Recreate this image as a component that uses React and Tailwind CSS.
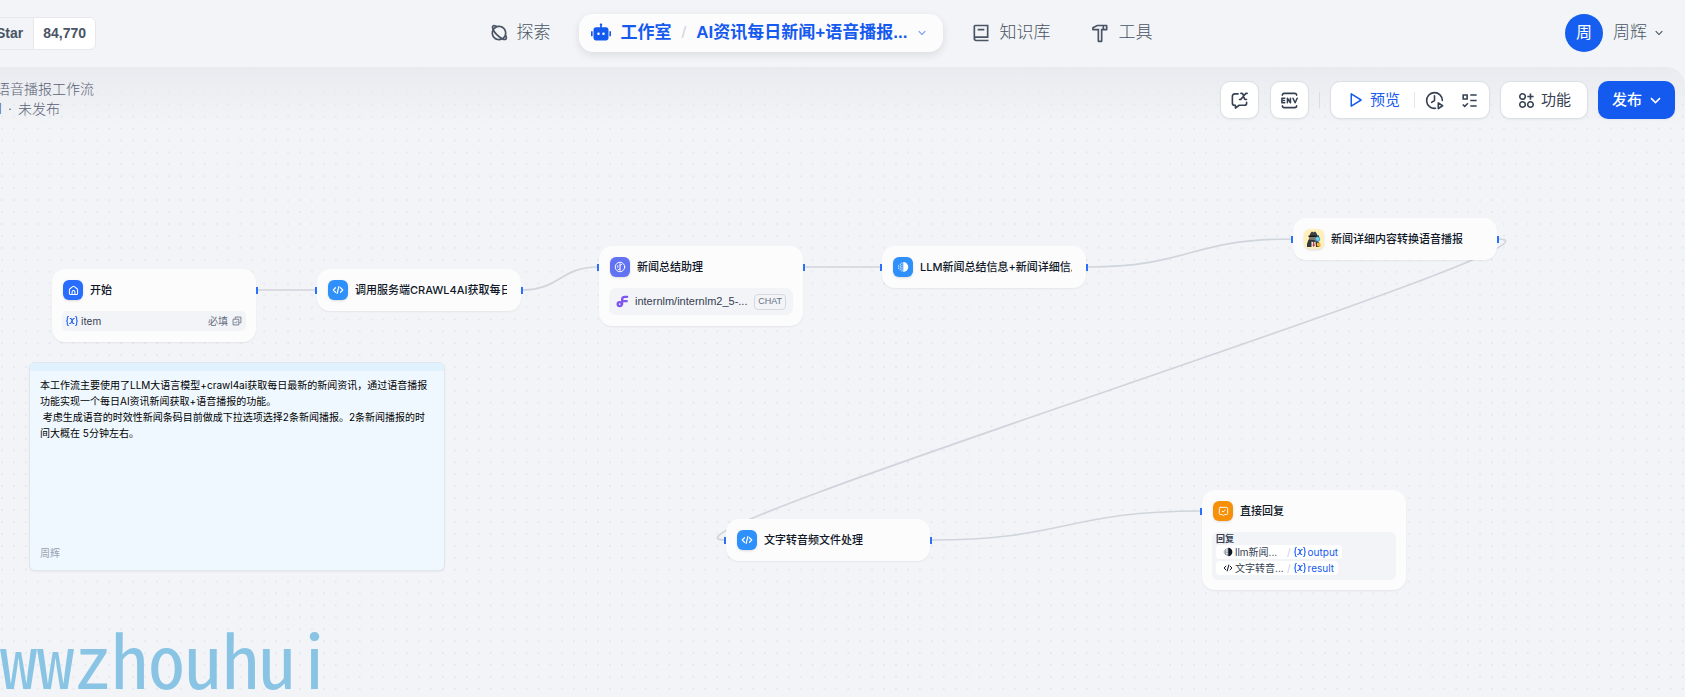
import React from 'react';
import {
  RiApps2AddLine,
  RiArrowDownSLine,
  RiBook2Line,
  RiHammerLine,
  RiListCheck3,
  RiPlanetLine,
  RiPlayLargeLine,
  RiRobot2Fill,
} from 'react-icons/ri';

const NODE_WIDTH = 204;

const EDGES = [
  [257, 223, 316, 223],
  [522, 223, 598, 200],
  [804, 200, 881, 200],
  [1087, 200, 1292, 172],
  [1498, 172, 725, 473],
  [931, 473, 1201, 444],
];

const edgePath = ([sx, sy, tx, ty]) => {
  const dx = tx - sx;
  const offset = dx >= 0 ? dx / 2 : 3.7 * Math.sqrt(-dx);
  return `M${sx} ${sy} C${sx + offset} ${sy} ${tx - offset} ${ty} ${tx} ${ty}`;
};

const CodeIcon = ({ className }) => (
  <svg viewBox="0 0 24 24" className={className} fill="none" stroke="currentColor" strokeWidth="2.4" strokeLinecap="round" strokeLinejoin="round">
    <path d="M7 7.5 2.5 12 7 16.5M17 7.5l4.5 4.5-4.5 4.5M13.8 5l-3.6 14" />
  </svg>
);

const HomeIcon = ({ className }) => (
  <svg viewBox="0 0 14 14" className={className} fill="none" stroke="currentColor" strokeWidth="1.3" strokeLinecap="round" strokeLinejoin="round">
    <path d="M1.8 6.2c0-.6.2-1 .7-1.4l3.4-2.7c.7-.5 1.5-.5 2.2 0l3.4 2.7c.5.4.7.8.7 1.4v4.5c0 .9-.6 1.5-1.5 1.5H3.3c-.9 0-1.5-.6-1.5-1.5z" />
    <path d="M5.2 12V8.8a1.8 1.8 0 0 1 3.6 0V12" />
  </svg>
);

const LlmIcon = ({ className }) => (
  <svg viewBox="0 0 24 24" className={className} fill="none" stroke="currentColor" strokeWidth="2" strokeLinecap="round" strokeLinejoin="round">
    <circle cx="12" cy="12" r="9.5" />
    <path d="M12 5.500v13M7.500 9.500v3M12 9l3-2M12 16l-3 1" />
  </svg>
);

const TemplateIcon = ({ className }) => (
  <svg viewBox="0 0 24 24" className={className} fill="currentColor">
    <path d="M12.5 2a10 10 0 0 1 0 20z" />
    <path d="M9 3h2v3H9zM9 7.5h2v3H9zM9 12h2v3H9zM9 16.5h2V21H9zM5.5 5.5h2v3h-2zM5.5 10h2v3.5h-2zM5.5 15h2v3.5h-2zM2 8.5h2V11H2zM2 13h2v2.5H2z" opacity=".8" />
  </svg>
);

const AnswerIcon = ({ className }) => (
  <svg viewBox="0 0 14 14" className={className} fill="none" stroke="currentColor" strokeWidth="1.2" strokeLinecap="round" strokeLinejoin="round">
    <path d="M3 1.7h8c.8 0 1.3.5 1.3 1.3v6.500c0 .8-.5 1.300-1.300 1.300H8.600L7 12.500l-1.600-1.700H3c-.8 0-1.300-.5-1.300-1.300V3c0-.8.5-1.300 1.300-1.300z" />
    <path d="m5.200 6.500 1.300 1.300L9 5" />
  </svg>
);

const DetectiveIcon = ({ className }) => (
  <svg viewBox="0 0 20 20" className={className}>
    <path d="M6 5 7.500 2.800h1.300l.7.600.7-.600h1.300L13 5l.5 2.500h-8z" fill="#3f4245" />
    <path d="M4.500 6.600h10.500V8H4.500z" fill="#17191b" />
    <path d="M5 8h9v4H5z" fill="#85796b" />
    <path d="M4.500 10.500 3 15v3h12.500v-4l-2-2.500z" fill="#35383b" />
    <path d="m7.500 12.500 2 .8 2-.8.500 5.500h-4.500z" fill="#f4f1ef" />
    <path d="M9.200 13h1l.6 3.700L9.700 18l-1.100-1.300z" fill="#cf3d36" />
    <circle cx="13.500" cy="10" r="2.300" fill="#6fd0ea" stroke="#2c91b5" strokeWidth=".8" />
    <path d="m13 13.500 3 .5 1 2.500-1.500 1.500-2.500-1z" fill="#f3b62c" />
  </svg>
);

const ModelIcon = ({ className }) => (
  <svg viewBox="0 0 14 14" className={className} fill="none" stroke="#7f56ed" strokeWidth="2.5" strokeLinecap="round">
    <circle cx="4" cy="9.800" r="2.200" />
    <path d="M6.600 10V5c0-2 1-3 2.800-3h2.600M6.800 6.600h4.800" />
  </svg>
);

const ChatVarIcon = ({ className }) => (
  <svg viewBox="0 0 20 20" className={className} fill="none" stroke="currentColor" strokeWidth="1.7" strokeLinecap="round" strokeLinejoin="round">
    <path d="M8.500 3H5C3.500 3 2.500 4 2.500 5.500v7C2.500 14 3.500 15 5 15h.7v3l4-3H15c1.500 0 2.500-1 2.500-2.500V12" />
    <path d="M11.500 2.500h.9c.8 0 1.200.4 1.400 1.100l1.300 4.300c.2.700.6 1.100 1.400 1.100h.9M18 2.500h-.5c-.7 0-1.200.3-1.600.9L12 8.100c-.4.600-.9.900-1.600.9H10" />
  </svg>
);

const EnvIcon = ({ className }) => (
  <svg viewBox="0 0 20 20" className={className} fill="none" stroke="currentColor" strokeWidth="1.6" strokeLinecap="round" strokeLinejoin="round">
    <path d="M2.500 4.500c0-1.200.8-2 2-2h11c1.200 0 2 .8 2 2M2.500 15.500c0 1.200.8 2 2 2h11c1.200 0 2-.8 2-2" />
    <path d="M5 7.600H2v4.800h3M2 10h2.700M7.800 12.400V7.600l3.200 4.800V7.600M13.700 7.600l2.200 4.800 2.200-4.800" />
  </svg>
);

const ClockPlayIcon = ({ className }) => (
  <svg viewBox="0 0 20 20" className={className} fill="none" stroke="currentColor" strokeWidth="1.7" strokeLinecap="round" strokeLinejoin="round">
    <path d="M11 18.200A8.300 8.300 0 1 1 18.300 10M10 5v5l-3 2" />
    <path d="m14 12.500 4.500 3-4.500 3z" />
  </svg>
);

const CopyCheckIcon = ({ className }) => (
  <svg viewBox="0 0 14 14" className={className} fill="none" stroke="currentColor" strokeWidth="1.2" strokeLinejoin="round">
    <path d="M4.500 4V1.500h8v8H10M1.500 4.500h8v8h-8z" />
    <path d="m3.500 8.500 1.500 1.500 2.600-3" />
  </svg>
);

const VarIcon = () => (
  <svg viewBox="0 0 14 14" className="size-3 shrink-0 text-[#155aef]" fill="none" stroke="currentColor" strokeWidth="1.2" strokeLinecap="round" strokeLinejoin="round">
    <path d="M2.800 1.800C1.700 1.800 1.500 2.400 1.500 3.300v2.200C1.500 6.400 1.200 7 .6 7c.6 0 .9.6.9 1.500v2.200c0 .9.2 1.500 1.300 1.500M11.200 1.800c1.100 0 1.300.6 1.300 1.500v2.200c0 .9.3 1.500.9 1.500-.6 0-.9.600-.9 1.500v2.200c0 .9-.2 1.500-1.300 1.500" />
    <path d="M4.900 4.200h.5c.6 0 .9.300 1.100.8l1.200 4c.2.500.5.8 1.100.8h.4M9.700 4.200h-.2c-.6 0-1 .3-1.400.8L5.900 9c-.4.500-.8.800-1.400.8h-.2" />
  </svg>
);

const Handle = ({ side }) => (
  <span className={`absolute top-[18px] h-[7px] w-[2px] bg-[#2970ff] ${side === 'left' ? '-left-[2px]' : '-right-[2px]'}`} />
);

const Node = ({ x, y, title, icon, color, input = true, output = true, children }) => (
  <section
    className="absolute rounded-[13px] bg-[#fcfcfd] shadow-[0_1px_2px_rgba(16,24,40,0.06)]"
    style={{ left: x, top: y, width: NODE_WIDTH }}
  >
    {input && <Handle side="left" />}
    {output && <Handle side="right" />}
    <div className="flex h-[42px] items-center gap-[7px] px-[11px]">
      <span className={`flex size-5 shrink-0 items-center justify-center rounded-md text-white shadow-sm ${color}`}>{icon}</span>
      <h2 className="mr-[3px] min-w-0 overflow-hidden whitespace-nowrap text-[11px] font-medium text-[#101828]">{title}</h2>
    </div>
    {children}
  </section>
);

const VarTag = ({ icon, node, name }) => (
  <div className="flex h-[14px] w-fit items-center rounded bg-white pr-1 pl-[7px] text-[10px]">
    {icon}
    <span className="ml-[2px] w-[52px] overflow-hidden whitespace-nowrap text-[#354052]">{node}</span>
    <span className="mr-[3px] text-[#c8ceda]">/</span>
    <VarIcon />
    <span className="ml-[2px] text-[#155aef]">{name}</span>
  </div>
);

const NavItem = ({ icon, label }) => (
  <a href="#" className="flex h-[38px] items-center gap-2 px-3 text-[17px] font-light text-[#495464]">
    {icon}
    {label}
  </a>
);

const Header = () => (
  <header className="flex h-[67px] shrink-0 items-center justify-between pr-[23px] pb-px font-['Liberation_Sans','Noto_Sans_CJK_SC',sans-serif]">
    <div className="flex w-24 justify-end overflow-hidden text-[14px] font-bold text-[#495464]">
      <a href="#" className="flex h-[33px] shrink-0 items-center rounded-[6px] border border-[#e6e8ed]">
        <span className="px-[10px]">Star</span>
        <span className="flex h-full items-center rounded-r-[5px] border-l border-[#e6e8ed] bg-white px-[9px]">84,770</span>
      </a>
    </div>

    <nav className="flex items-center gap-4">
      <NavItem icon={<RiPlanetLine className="size-5" />} label="探索" />
      <div className="flex h-[38px] items-center rounded-[14px] bg-[#fcfcfd] pr-[14px] pl-3 text-[17px] font-bold text-[#155aef] shadow-[0_3px_8px_rgba(16,24,40,0.1)]">
        <a href="#" className="flex items-center gap-[10px]">
          <RiRobot2Fill className="size-5" />
          工作室
        </a>
        <span className="mx-[10px] font-normal text-[#d0d5dc]">/</span>
        <button className="flex items-center gap-[8px]">
          AI资讯每日新闻+语音播报...
          <RiArrowDownSLine className="size-[14px] opacity-60" />
        </button>
      </div>
      <NavItem icon={<RiBook2Line className="size-5" />} label="知识库" />
      <NavItem icon={<RiHammerLine className="size-5" />} label="工具" />
    </nav>

    <button className="flex items-center pl-5 text-[17px] font-light text-[#495464]">
      <span className="flex size-[38px] items-center justify-center rounded-full bg-[#155eef] text-[16px] font-normal text-white">周</span>
      <span className="ml-[10px]">周辉</span>
      <RiArrowDownSLine className="-mr-1 ml-[5px] size-[14px]" />
    </button>
  </header>
);

const Toolbar = () => (
  <div className="relative z-10 flex items-start justify-between pt-[14px] pr-[10px]">
    <div className="w-[94px] overflow-hidden text-[14px] leading-5 font-light whitespace-nowrap text-[#596175]">
      <div className="-mt-[2px] flex justify-end">语音播报工作流</div>
      <div className="flex justify-end gap-[6px] pr-[34px]">
        <span>1</span>
        <span>·</span>
        <span>未发布</span>
      </div>
    </div>
    <div className="flex items-center text-[15px] text-[#354052]">
      <button aria-label="会话变量" className="mr-[11px] flex h-[38px] w-[39px] items-center justify-center rounded-[10px] border border-[#dcdfe5] bg-white shadow-xs">
        <ChatVarIcon className="size-[19px]" />
      </button>
      <button aria-label="环境变量" className="flex h-[38px] w-[39px] items-center justify-center rounded-[10px] border border-[#dcdfe5] bg-white shadow-xs">
        <EnvIcon className="size-[19px]" />
      </button>
      <span className="mx-[10px] h-4 w-px bg-[#d9dce3]" />
      <div className="mr-[10px] flex h-[38px] items-center rounded-[10px] border border-[#dcdfe5] bg-white pr-[10px] pl-[15px] shadow-xs">
        <button className="flex items-center gap-[6px] text-[#155aef]">
          <RiPlayLargeLine className="size-[18px]" />
          预览
        </button>
        <span className="mr-[10px] ml-[14px] h-4 w-px bg-[#e3e6eb]" />
        <button aria-label="运行历史">
          <ClockPlayIcon className="size-[19px]" />
        </button>
        <button aria-label="检查清单" className="ml-[16px]">
          <RiListCheck3 className="size-[19px]" />
        </button>
      </div>
      <button className="mr-[10px] flex h-[38px] items-center gap-[5px] rounded-[10px] border border-[#dcdfe5] bg-white px-4 shadow-xs">
        <RiApps2AddLine className="size-[19px]" />
        功能
      </button>
      <button className="flex h-[38px] items-center gap-1 rounded-[10px] bg-[#155aef] pr-[10px] pl-[14px] font-medium text-white shadow-xs">
        发布
        <RiArrowDownSLine className="size-[19px]" />
      </button>
    </div>
  </div>
);

const Note = () => (
  <article className="absolute top-[295px] left-[29px] flex h-[209px] w-[416px] flex-col overflow-hidden rounded-[6px] border border-[#e1e6ee] bg-[#eff8ff] text-[10px] text-black shadow-xs">
    <div className="h-[8px] shrink-0 bg-[#e0f2fe]" />
    <div className="flex-1 px-[10px] pt-[6px] leading-[16px] whitespace-pre">
      <p>本工作流主要使用了LLM大语言模型+crawl4ai获取每日最新的新闻资讯，通过语音播报</p>
      <p>功能实现一个每日AI资讯新闻获取+语音播报的功能。</p>
      <p> 考虑生成语音的时效性新闻条码目前做成下拉选项选择2条新闻播报。2条新闻播报的时</p>
      <p>间大概在 5分钟左右。</p>
    </div>
    <div className="px-[10px] pb-[9px] text-[#98a2b3]">周辉</div>
  </article>
);

const Canvas = () => (
  <div className="absolute inset-0">
    <svg className="absolute inset-0 size-full" fill="none">
      <defs>
        <pattern id="dots" width="11.92" height="11.92" patternUnits="userSpaceOnUse">
          <circle cx="2" cy="2" r="0.9" fill="#e1e4ea" />
        </pattern>
      </defs>
      <rect width="100%" height="100%" fill="url(#dots)" />
      {EDGES.map((edge) => (
        <path key={edge.join()} d={edgePath(edge)} stroke="#d0d5dd" strokeWidth="1.7" />
      ))}
    </svg>

    <Node x={52} y={202} title="开始" color="bg-[#296dff]" icon={<HomeIcon className="size-[11px]" />} input={false}>
      <div className="mx-[10px] mb-[11px] flex h-5 items-center rounded-[5px] bg-[#f2f4f7] px-1 text-[10px] text-[#354052]">
        <VarIcon />
        <span className="ml-[3px]">item</span>
        <span className="mr-1 ml-auto text-[#676f83]">必填</span>
        <CopyCheckIcon className="size-[10px] text-[#676f83]" />
      </div>
    </Node>

    <Node x={317} y={202} title="调用服务端CRAWL4AI获取每日" color="bg-[#2e90fa]" icon={<CodeIcon className="size-[12px]" />} />

    <Node x={599} y={179} title="新闻总结助理" color="bg-[#6172f3]" icon={<LlmIcon className="size-[12px]" />}>
      <div className="mx-[10px] mb-[11px] flex h-[27px] items-center rounded-[7px] bg-[#f2f4f7] px-[7px] font-['Liberation_Sans',sans-serif] text-[11px] text-[#354052]">
        <ModelIcon className="size-[13px] shrink-0" />
        <span className="ml-[6px] flex-1 whitespace-nowrap">internlm/internlm2_5-...</span>
        <span className="flex h-4 items-center rounded-[4px] border border-[#d5d9e2] px-[3px] text-[9px] text-[#676f83]">CHAT</span>
      </div>
    </Node>

    <Node x={882} y={179} title="LLM新闻总结信息+新闻详细信息" color="bg-[#2e90fa]" icon={<TemplateIcon className="size-[12px]" />} />

    <Node x={1293} y={151} title="新闻详细内容转换语音播报" color="bg-[#fef0b8]" icon={<DetectiveIcon className="size-5" />} />

    <Node x={726} y={452} title="文字转音频文件处理" color="bg-[#2e90fa]" icon={<CodeIcon className="size-[12px]" />} />

    <Node x={1202} y={423} title="直接回复" color="bg-[#f79009]" icon={<AnswerIcon className="size-[11px]" />} output={false}>
      <div className="mx-[10px] mb-[10px] flex h-12 flex-col gap-[2px] rounded-[5px] bg-[#f2f4f7] px-1 pt-[2px]">
        <div className="h-[9px] text-[9px] leading-[9px] font-bold text-[#354052]">回复</div>
        <VarTag icon={<TemplateIcon className="size-[10px] text-[#101828]" />} node="llm新闻..." name="output" />
        <VarTag icon={<CodeIcon className="size-[10px] text-[#101828]" />} node="文字转音..." name="result" />
      </div>
    </Node>

    <Note />

    <div className="absolute bottom-0 left-0 font-['Noto_Sans_Mono_CJK_SC','DejaVu_Sans_Mono',monospace] text-[74px] leading-[80px] text-[#8ac4e4]">
      wwzhouhui
    </div>
  </div>
);

const App = () => (
  <div className="flex min-h-screen flex-col bg-[#f2f4f7] font-[Inter,'Noto_Sans_CJK_SC',sans-serif]">
    <Header />
    <main className="relative flex-1 overflow-hidden rounded-tr-[19px]">
      <Canvas />
      <div className="absolute inset-x-0 top-0 h-[60px] bg-linear-to-b from-[#e9ebf0] to-transparent" />
      <Toolbar />
    </main>
  </div>
);

export default App;
